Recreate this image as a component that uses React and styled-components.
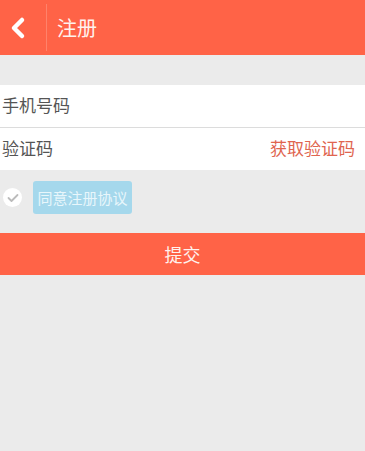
import React from 'react';
import styled, { createGlobalStyle } from 'styled-components';

const GlobalStyle = createGlobalStyle`
  html, body {
    margin: 0;
    padding: 0;
    background: #ebebeb;
    font-family: "Noto Sans CJK SC", "Liberation Sans", sans-serif;
  }
`;

export default function App() {
  return (
    <Page>
      <GlobalStyle />
      <Header>
        <BackButton>
          <svg width="18" height="24" viewBox="0 0 18 24">
            <path
              d="M13 4 L5 12 L13 20"
              fill="none"
              stroke="#fff"
              strokeWidth="4.5"
              strokeLinecap="round"
              strokeLinejoin="round"
            />
          </svg>
        </BackButton>
        <Title>注册</Title>
      </Header>
      <Form>
        <Row>
          <Input placeholder="手机号码" />
        </Row>
        <Row>
          <Input placeholder="验证码" />
          <CodeLink>获取验证码</CodeLink>
        </Row>
      </Form>
      <AgreeRow>
        <Check>
          <svg width="12" height="10" viewBox="0 0 12 10">
            <path
              d="M1.5 5 L4.5 8 L10.5 2"
              fill="none"
              stroke="#bbb"
              strokeWidth="1.8"
              strokeLinecap="round"
              strokeLinejoin="round"
            />
          </svg>
        </Check>
        <Agreement>同意注册协议</Agreement>
      </AgreeRow>
      <Submit>提交</Submit>
    </Page>
  );
}

const Page = styled.div`
  width: 365px;
  min-height: 451px;
  background: #ebebeb;
`;

const Header = styled.header`
  display: flex;
  align-items: center;
  height: 55px;
  background: #ff6347;
`;

const BackButton = styled.div`
  display: flex;
  align-items: center;
  justify-content: center;
  width: 47px;
  height: 47px;
  border-right: 1px solid rgba(255, 255, 255, 0.2);
  box-sizing: border-box;
  padding-right: 10px;
`;

const Title = styled.h1`
  margin: 0 0 0 10px;
  font-size: 20px;
  font-weight: 400;
  color: #fff2ee;
`;

const Form = styled.div`
  margin-top: 30px;
  background: #fff;
`;

const Row = styled.div`
  display: flex;
  align-items: center;
  height: 42px;
  padding: 0 10px 0 2px;

  & + & {
    border-top: 1px solid #dcdcdc;
  }
`;

const Input = styled.input`
  flex: 1;
  min-width: 0;
  border: none;
  outline: none;
  padding: 0 0 3px;
  font-family: inherit;
  font-size: 17px;
  color: #333;
  background: transparent;

  &::placeholder {
    color: #555;
  }
`;

const CodeLink = styled.span`
  padding-bottom: 3px;
  font-size: 17px;
  color: #e0654f;
`;

const AgreeRow = styled.div`
  display: flex;
  align-items: center;
  gap: 11px;
  padding: 11px 0 0 3px;
`;

const Check = styled.span`
  display: flex;
  align-items: center;
  justify-content: center;
  width: 19px;
  height: 19px;
  border-radius: 50%;
  background: #fff;
`;

const Agreement = styled.span`
  display: flex;
  align-items: center;
  justify-content: center;
  width: 99px;
  height: 33px;
  border-radius: 3px;
  background: #a5d8ec;
  color: #e8f6fb;
  font-size: 15px;
`;

const Submit = styled.button`
  display: block;
  width: 100%;
  height: 42px;
  margin-top: 19px;
  border: none;
  background: #ff6347;
  color: #fff2ee;
  font-family: inherit;
  font-size: 18px;
  cursor: pointer;
`;
